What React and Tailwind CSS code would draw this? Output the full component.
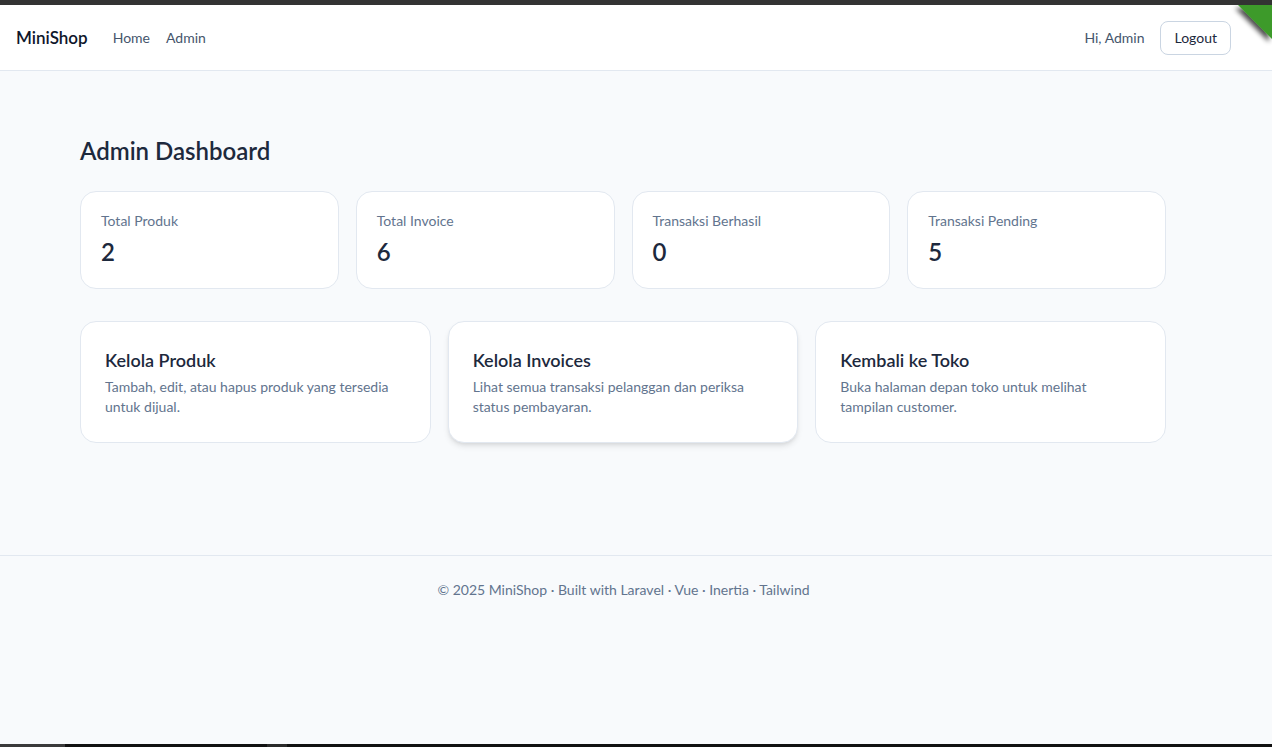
import React from "react";

const stats = [
  { label: "Total Produk", value: 2 },
  { label: "Total Invoice", value: 6 },
  { label: "Transaksi Berhasil", value: 0 },
  { label: "Transaksi Pending", value: 5 },
];

const actions = [
  {
    title: "Kelola Produk",
    desc: "Tambah, edit, atau hapus produk yang tersedia untuk dijual.",
  },
  {
    title: "Kelola Invoices",
    desc: "Lihat semua transaksi pelanggan dan periksa status pembayaran.",
    hover: true,
  },
  {
    title: "Kembali ke Toko",
    desc: "Buka halaman depan toko untuk melihat tampilan customer.",
  },
];

export default function App() {
  return (
    <div
      className="relative h-[747px] w-full overflow-hidden bg-[#2f2f2f] text-slate-900"
      style={{ fontFamily: "Lato, 'Noto Sans', sans-serif" }}
    >
      {/* top window strip */}
      <div className="h-[5px] bg-[#333333]" />

      <div className="flex h-[739px] flex-col bg-slate-50">
        {/* Navbar */}
        <nav className="border-b border-slate-200 bg-white">
          <div className="flex h-[65px] items-center justify-between pl-4 pr-[41px]">
            <div className="flex items-center">
              <span className="text-[17px] font-semibold text-slate-900">MiniShop</span>
              <div className="ml-[25px] flex items-center gap-4 text-sm text-slate-600">
                <a href="#">Home</a>
                <a href="#">Admin</a>
              </div>
            </div>
            <div className="flex items-center gap-4 text-sm">
              <span className="text-slate-600">Hi, Admin</span>
              <button className="rounded-lg border border-slate-300 bg-white px-[13px] py-1.5 text-slate-800">
                Logout
              </button>
            </div>
          </div>
        </nav>

        {/* Main */}
        <main>
          <div className="ml-[80px] w-[1086px] pt-[64px] pb-[112px]">
            <h1 className="text-2xl font-semibold text-slate-800">Admin Dashboard</h1>

            <div className="mt-[24px] grid grid-cols-4 gap-[17px]">
              {stats.map((s) => (
                <div
                  key={s.label}
                  className="h-[98px] rounded-2xl border border-slate-200 bg-white px-5 pt-[19px]"
                >
                  <div className="text-sm text-slate-500">{s.label}</div>
                  <div className="mt-[5px] text-2xl font-semibold text-slate-800">{s.value}</div>
                </div>
              ))}
            </div>

            <div className="mt-8 grid grid-cols-3 gap-[17px]">
              {actions.map((a) => (
                <div
                  key={a.title}
                  className={
                    "h-[122px] rounded-2xl border border-slate-200 bg-white px-6 pt-[24px] " +
                    (a.hover ? "shadow-md" : "")
                  }
                >
                  <h2 className="text-lg font-semibold text-slate-800">{a.title}</h2>
                  <p className="mt-[3px] pr-4 text-sm leading-5 text-slate-500">{a.desc}</p>
                </div>
              ))}
            </div>
          </div>
        </main>

        {/* Footer */}
        <footer className="border-t border-slate-200">
          <div className="py-6 pr-[25px] text-center text-sm text-slate-500">
            © 2025 MiniShop · Built with Laravel · Vue · Inertia · Tailwind
          </div>
        </footer>
      </div>

      {/* bottom taskbar strip */}
      <div className="flex h-[3px] bg-[#111111]">
        <div className="w-[65px] bg-[#3a3a3a]" />
        <div className="ml-[202px] w-[20px] bg-[#2a2a2a]" />
      </div>

      {/* corner ribbon */}
      <svg className="absolute right-0 top-[5px]" width="50" height="50" viewBox="0 0 50 50">
        <defs>
          <filter id="rs" x="-50%" y="-50%" width="200%" height="200%">
            <feGaussianBlur in="SourceAlpha" stdDeviation="2.5" />
            <feOffset dx="-3" dy="3" />
            <feComponentTransfer>
              <feFuncA type="linear" slope="0.7" />
            </feComponentTransfer>
            <feMerge>
              <feMergeNode />
              <feMergeNode in="SourceGraphic" />
            </feMerge>
          </filter>
        </defs>
        <polygon points="16,0 50,0 50,34" fill="#3d9a2b" filter="url(#rs)" />
      </svg>
    </div>
  );
}
